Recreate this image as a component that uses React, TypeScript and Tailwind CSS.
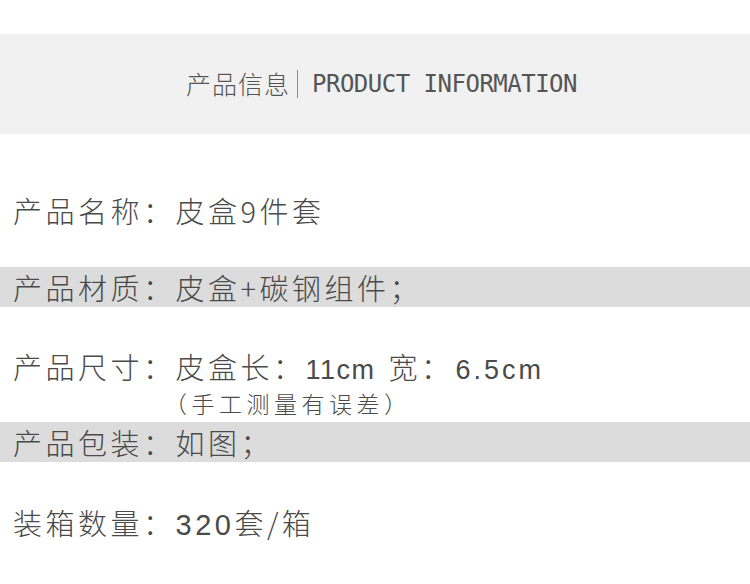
import React from 'react';

const cjk = "font-['Noto_Sans_CJK_SC',sans-serif]";
const latin = "font-['Liberation_Sans',sans-serif] text-[27px] tracking-[1.5px]";

const App: React.FC = () => {
    // Base class for a spec line
    const lineClass = `${cjk} text-[29px] font-light tracking-[3.5px] text-[#4a4a4a] leading-[40px] pl-[13px] whitespace-nowrap`;

    return (
        <div className="w-[750px] h-[584px] bg-white overflow-hidden">
            <div className="h-[34px]"></div>
            <header className="h-[100px] bg-[#f1f1f1] flex items-center justify-center pl-[13px]">
                <span className={`${cjk} text-[25px] font-light text-[#555] tracking-[1px]`}>产品信息</span>
                <span className="w-px h-[28px] bg-[#8a8a8a] ml-[7px] mr-[14px]"></span>
                <span className="font-['DejaVu_Sans_Mono',monospace] text-[24px] tracking-[-0.5px] text-[#555]">
                    PRODUCT INFORMATION
                </span>
            </header>

            <div className="h-[133px] pt-[56px]">
                <p className={lineClass}>产品名称：皮盒9件套</p>
            </div>

            <div className="h-[40px] bg-[#dcdcdc]">
                <p className={lineClass}>产品材质：皮盒+碳钢组件；</p>
            </div>

            <div className="h-[115px] pt-[39px]">
                <p className={lineClass}>
                    产品尺寸：皮盒长：<span className={latin}>11cm</span> <span className="ml-[3px]">宽：</span><span className="font-['Liberation_Sans',sans-serif] text-[27px] tracking-[3px] ml-[2px]">6.5cm</span>
                </p>
                <p className={`${cjk} text-[23px] font-light tracking-[4.5px] text-[#4a4a4a] leading-[26px] pl-[164px] whitespace-nowrap`}>
                    （手工测量有误差）
                </p>
            </div>

            <div className="h-[40px] bg-[#dcdcdc]">
                <p className={lineClass}>产品包装：如图；</p>
            </div>

            <div className="pt-[40px]">
                <p className={lineClass}>
                    装箱数量：<span className="font-['Liberation_Sans',sans-serif]">320</span>套/箱
                </p>
            </div>
        </div>
    );
};

export default App;
